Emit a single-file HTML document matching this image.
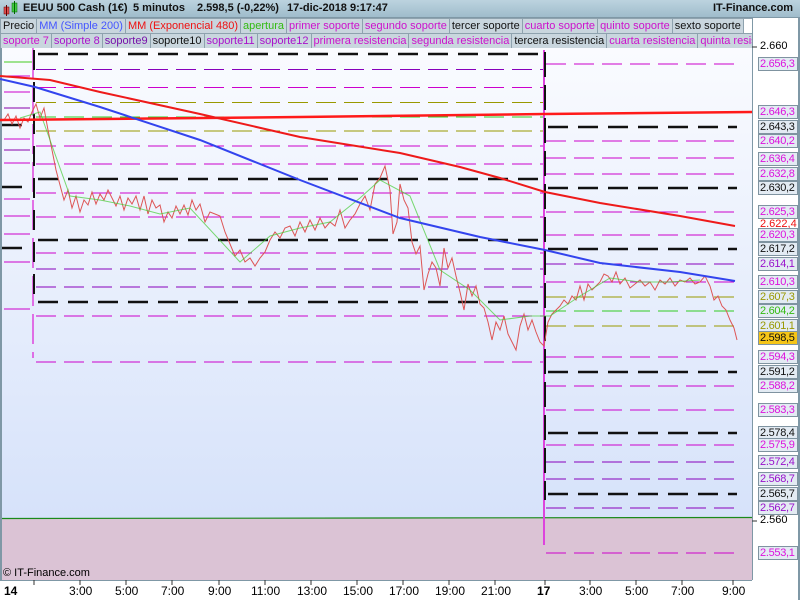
<!DOCTYPE html>
<html><head><meta charset="utf-8"><style>
body{margin:0;width:800px;height:600px;overflow:hidden;font-family:"Liberation Sans",sans-serif;background:#fff;position:relative}
#title{position:absolute;left:0;top:0;width:800px;height:17px;background:linear-gradient(#bcd3df,#9fbccb);border-bottom:1px solid #7f98a6}
#title span{position:absolute;top:2px;font-size:11px;font-weight:bold;color:#111;white-space:nowrap}
.row{position:absolute;left:0;height:15px;display:flex;overflow:hidden}
.row div{flex-shrink:0;font-size:11px;line-height:14px;height:14px;padding:0 2px;background:#c9d6de;border:1px solid #8ea2ae;border-left:none;white-space:nowrap}
.ax{position:absolute;font-size:11px;color:#000;white-space:nowrap}
.lb{position:absolute;left:758px;width:40px;height:14px;font-size:11px;letter-spacing:-0.3px;line-height:13px;background:#e3ebf3;border:1px solid #7f93a0;box-sizing:border-box;padding-left:1px;white-space:nowrap;overflow:hidden}
.bt{position:absolute;top:584px;font-size:12px}
</style></head><body>
<svg width="800" height="600" style="position:absolute;left:0;top:0">
<defs><linearGradient id="g" x1="0" y1="0" x2="0" y2="1"><stop offset="0" stop-color="#fbfcff"/><stop offset="1" stop-color="#d6e2fa"/></linearGradient></defs>
<rect x="2" y="34" width="750" height="485" fill="url(#g)"/>
<rect x="2" y="518" width="750" height="62" fill="#dbc3d5"/>
<line x1="2" y1="518.5" x2="752" y2="517.5" stroke="#1a8a1a" stroke-width="1.2"/>
<line x1="1" y1="34" x2="1" y2="580" stroke="#7f98a6" stroke-width="2"/>
<line x1="752.5" y1="18" x2="752.5" y2="580" stroke="#7f98a6" stroke-width="1"/>
<line x1="0" y1="580.5" x2="752" y2="580.5" stroke="#7f98a6"/>
<line x1="799" y1="18" x2="799" y2="600" stroke="#7f98a6" stroke-width="2"/>
<g stroke-width="1" fill="none">
<path d="M4 62H32" stroke="#44cc22"/>
<path d="M4 76H30M4 92H30M4 139H30M4 163H30M4 199H30M4 216H30M4 234H30M4 262H30M4 309H30" stroke="#cc00cc"/>
<path d="M4 108H30M4 150H30" stroke="#8800aa"/>
<path d="M2 125H22M2 187H22M2 248H22" stroke="#111" stroke-width="2.5"/>
</g>
<g fill="none">
<g stroke-dasharray="20,10" stroke="#111" stroke-width="2.5"><path d="M38 54H545M38 179H545M38 240H545M38 302H545"/></g>
<g stroke-dasharray="20,8" stroke-width="1">
<path d="M36 87.5H545M36 146H545M36 164H545M36 193H545M36 217H545M36 253H545M36 316H545M36 362H545" stroke="#cc00cc"/>
<path d="M36 69.5H545M36 269H545M36 287H545" stroke="#8800bb"/>
<path d="M36 102.5H545M36 131H545" stroke="#999900"/>
<path d="M36 117H545" stroke="#33cc22"/>
</g>
<g stroke-dasharray="20,10" stroke="#111" stroke-width="2.5"><path d="M548 127H737M548 188H737M548 249H737M548 372H737M548 433H737M548 494H737"/></g>
<g stroke-dasharray="20,8" stroke-width="1">
<path d="M546 64H737M546 141H737M546 158H737M546 174H737M546 212H737M546 235H737M546 282H737M546 357H737M546 386H737M546 410H737M546 445H737M546 553H737" stroke="#cc00cc"/>
<path d="M546 264H737M546 462H737M546 479H737M546 508H737" stroke="#8800bb"/>
<path d="M546 297H737M546 326H737" stroke="#999900"/>
<path d="M546 311H737" stroke="#33cc22"/>
</g>
<path d="M33 48V358" stroke="#dd44dd" stroke-width="1.5" stroke-dasharray="30,8"/>
<path d="M34 50V300" stroke="#111" stroke-width="2" stroke-dasharray="20,12"/>
<path d="M544 50V545" stroke="#dd44dd" stroke-width="2"/>
<path d="M545 52V500" stroke="#111" stroke-width="2" stroke-dasharray="25,8"/>
</g>
<polyline fill="none" stroke="#dd5555" stroke-width="1" points="4,120 8,114 12,124 16,116 20,128 24,118 28,122 32,112 36,104 40,118 44,108 48,130 52,150 56,170 60,185 64,200 68,190 72,208 76,196 80,212 84,200 88,205 92,192 96,204 100,194 104,200 108,190 112,198 116,206 120,196 124,210 128,198 132,204 136,196 140,210 144,196 148,214 152,200 156,208 160,205 164,222 168,212 172,218 176,206 180,214 184,205 188,215 192,200 196,210 200,204 205,222 210,212 215,214 220,216 225,232 230,244 235,256 240,250 245,262 250,258 255,266 260,258 265,252 270,240 275,232 280,238 285,228 290,226 295,236 300,222 305,232 310,220 315,230 320,218 325,228 330,222 335,226 340,210 345,228 350,220 355,214 360,204 365,196 370,210 375,184 380,178 385,166 390,190 393,234 397,222 400,184 404,200 408,208 412,242 416,254 420,246 424,290 428,274 432,262 436,268 440,286 444,248 448,268 452,258 456,276 460,292 464,310 468,284 472,296 476,286 480,304 484,308 488,322 492,340 496,322 500,330 504,316 508,334 512,342 516,350 520,326 524,314 528,330 532,320 536,332 540,342 544,346 548,322 552,314 556,310 560,306 564,300 568,304 572,296 576,300 580,286 584,300 588,284 592,290 596,286 600,282 604,274 608,276 612,282 616,272 620,284 625,278 630,288 635,284 640,280 645,286 650,282 655,290 660,280 665,284 670,278 675,286 680,280 685,282 690,278 695,284 700,282 705,276 710,286 714,300 718,296 722,306 726,310 730,320 734,328 737,340"/>
<polyline fill="none" stroke="#44cc33" stroke-width="1" opacity=".7" points="20,118 40,112 70,196 100,200 130,206 160,214 190,208 240,262 270,236 300,228 330,222 360,198 380,180 410,196 440,270 470,290 500,320 530,316 550,316 580,296 610,278 640,282 670,282 700,280"/>
<polyline fill="none" stroke="#ff1a1a" stroke-width="2.5" points="0,120 300,117 545,114 752,112"/>
<polyline fill="none" stroke="#ee1a1a" stroke-width="2" points="0,76 50,80 100,92 200,114 300,137 400,153 460,167 500,178 545,192 600,203 680,216 735,226"/>
<polyline fill="none" stroke="#3344ee" stroke-width="2" points="0,79 35,87 100,107 200,140 300,180 400,218 480,237 545,250 600,263 680,272 735,281"/>
<g stroke="#333"><path d="M752 47H757M752 521H757"/></g>
<g stroke="#333"><path d="M34 580V585M80 580V585M126 580V585M172 580V585M219 580V585M265 580V585M311 580V585M357 580V585M403 580V585M449 580V585M495 580V585M545 580V585M590 580V585M636 580V585M682 580V585M733 580V585"/></g>
</svg>
<div id="title"><svg width="16" height="16" style="position:absolute;left:3px;top:1px"><rect x="1" y="6" width="5" height="7" fill="#e05050" stroke="#600" stroke-width=".5"/><line x1="3.5" y1="4" x2="3.5" y2="15" stroke="#600"/><rect x="9" y="2" width="5" height="9" fill="#44cc44" stroke="#060" stroke-width=".5"/><line x1="11.5" y1="0" x2="11.5" y2="13" stroke="#060"/></svg>
<span style="left:23px">EEUU 500 Cash (1€)</span><span style="left:133px">5 minutos</span><span style="left:197px">2.598,5 (-0,22%)</span><span style="left:287px">17-dic-2018 9:17:47</span>
<span style="left:713px">IT-Finance.com</span></div>
<div class="row" style="top:18px;width:752px"><div style="color:#111;border-left:1px solid #8ea2ae">Precio</div><div style="color:#4455ff">MM (Simple 200)</div><div style="color:#ee1111">MM (Exponencial 480)</div><div style="color:#33bb11">apertura</div><div style="color:#cc11cc">primer soporte</div><div style="color:#cc11cc">segundo soporte</div><div style="color:#111">tercer soporte</div><div style="color:#cc11cc">cuarto soporte</div><div style="color:#cc11cc">quinto soporte</div><div style="color:#111">sexto soporte</div><div style="background:#fff;width:14px"></div></div>
<div class="row" style="top:33px;width:752px"><div style="color:#cc11cc;border-left:1px solid #8ea2ae">soporte 7</div><div style="color:#aa11cc">soporte 8</div><div style="color:#7711aa">soporte9</div><div style="color:#111">soporte10</div><div style="color:#aa11cc">soporte11</div><div style="color:#aa11cc">soporte12</div><div style="color:#cc11cc">primera resistencia</div><div style="color:#cc11cc">segunda resistencia</div><div style="color:#111">tercera resistencia</div><div style="color:#cc11cc">cuarta resistencia</div><div style="color:#cc11cc">quinta resistencia</div></div>
<div class="ax" style="left:760px;top:40px">2.660</div>
<div class="ax" style="left:760px;top:514px">2.560</div>
<div class="lb" style="top:57px;color:#dd11dd">2.656,3</div>
<div class="lb" style="top:105px;color:#dd11dd">2.646,3</div>
<div class="lb" style="top:120px;color:#111">2.643,3</div>
<div class="lb" style="top:134px;color:#dd11dd">2.640,2</div>
<div class="lb" style="top:152px;color:#dd11dd">2.636,4</div>
<div class="lb" style="top:167px;color:#dd11dd">2.632,8</div>
<div class="lb" style="top:181px;color:#111">2.630,2</div>
<div class="lb" style="top:205px;color:#dd11dd">2.625,3</div>
<div class="ax" style="left:760px;top:218px;color:#ee1111">2.622,4</div>
<div class="lb" style="top:228px;color:#dd11dd">2.620,3</div>
<div class="lb" style="top:242px;color:#111">2.617,2</div>
<div class="lb" style="top:257px;color:#9911cc">2.614,1</div>
<div class="lb" style="top:275px;color:#dd11dd">2.610,3</div>
<div class="lb" style="top:290px;color:#999900">2.607,3</div>
<div class="lb" style="top:304px;color:#33bb11">2.604,2</div>
<div class="lb" style="top:319px;color:#999900">2.601,1</div>
<div class="lb" style="top:331px;color:#111;background:#f5c518">2.598,5</div>
<div class="lb" style="top:350px;color:#dd11dd">2.594,3</div>
<div class="lb" style="top:365px;color:#111">2.591,2</div>
<div class="lb" style="top:379px;color:#dd11dd">2.588,2</div>
<div class="lb" style="top:403px;color:#dd11dd">2.583,3</div>
<div class="lb" style="top:426px;color:#111">2.578,4</div>
<div class="lb" style="top:438px;color:#dd11dd">2.575,9</div>
<div class="lb" style="top:455px;color:#9911cc">2.572,4</div>
<div class="lb" style="top:472px;color:#9911cc">2.568,7</div>
<div class="lb" style="top:487px;color:#111">2.565,7</div>
<div class="lb" style="top:501px;color:#9911cc">2.562,7</div>
<div class="lb" style="top:546px;color:#dd11dd">2.553,1</div>
<div class="ax" style="left:3px;top:567px;font-size:11px">© IT-Finance.com</div>
<div class="bt" style="left:4px;font-weight:bold">14</div>
<div class="bt" style="left:69px">3:00</div>
<div class="bt" style="left:115px">5:00</div>
<div class="bt" style="left:161px">7:00</div>
<div class="bt" style="left:208px">9:00</div>
<div class="bt" style="left:251px">11:00</div>
<div class="bt" style="left:297px">13:00</div>
<div class="bt" style="left:343px">15:00</div>
<div class="bt" style="left:389px">17:00</div>
<div class="bt" style="left:435px">19:00</div>
<div class="bt" style="left:481px">21:00</div>
<div class="bt" style="left:537px;font-weight:bold">17</div>
<div class="bt" style="left:579px">3:00</div>
<div class="bt" style="left:625px">5:00</div>
<div class="bt" style="left:671px">7:00</div>
<div class="bt" style="left:722px">9:00</div>
</body></html>
